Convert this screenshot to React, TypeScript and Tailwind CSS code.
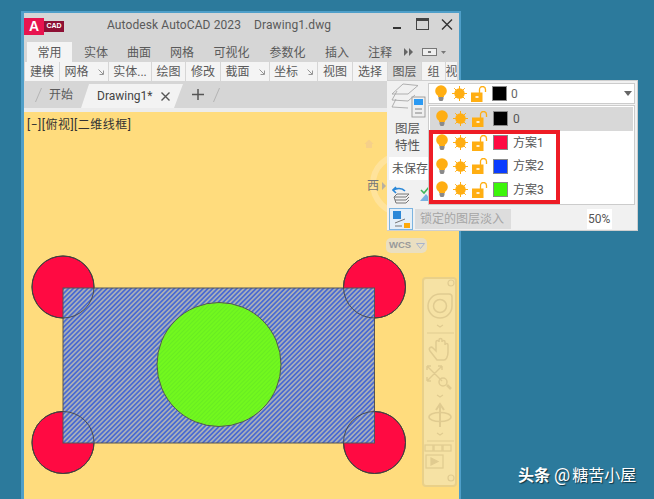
import React from "react";

const cjk = { fontFamily: 'Roboto,"Noto Sans CJK SC",sans-serif' };

function Bulb() {
  return (
    <svg width="12" height="17" viewBox="0 0 12 17" className="shrink-0">
      <circle cx="6" cy="6" r="5.800" fill="#ffae12" />
      <path d="M3.500 11h5v3l-1 2h-3l-1-2z" fill="#8a8a8a" />
      <path d="M3 11.500h6" stroke="#ffae12" strokeWidth="1" />
    </svg>
  );
}
function Sun() {
  return (
    <svg width="15" height="15" viewBox="0 0 15 15" className="shrink-0">
      <circle cx="7.500" cy="7.500" r="5.200" fill="#ffae12" />
      <g stroke="#ffae12" strokeWidth="1">
        <path d="M7.500 0v3M7.500 12v3M0 7.500h3M12 7.500h3M2.200 2.200l2 2M10.800 10.800l2 2M2.200 12.800l2-2M10.800 4.200l2-2" />
      </g>
    </svg>
  );
}
function Lock() {
  return (
    <svg width="16" height="16" viewBox="0 0 16 16" className="shrink-0">
      <path d="M8.500 7V3.500a3 3 0 0 1 6 0V6" fill="none" stroke="#ffae12" strokeWidth="1.300" />
      <rect x="0" y="6.500" width="11.500" height="9.500" fill="#ffae12" />
      <rect x="4.500" y="10" width="3" height="2" fill="#fff" opacity="0.8" />
    </svg>
  );
}
function LayerRow({ color, name, active }: { color: string; name: string; active?: boolean }) {
  return (
    <div className={`flex items-center h-[23.700px] pl-[6px] ${active ? "bg-[#d8d8d8]" : ""}`}>
      <Bulb />
      <span className="w-[5px] shrink-0" />
      <Sun />
      <span className="w-[4px] shrink-0" />
      <Lock />
      <span className={`ml-[5px] w-[15px] h-[15px] shrink-0 border-[1.500px] border-[#8a8a8a] ${color}`} />
      <span className="ml-[5px] text-[12px] text-[#555]">{name}</span>
    </div>
  );
}
function Arrow() {
  return (
    <svg width="6" height="6" viewBox="0 0 6 6" className="shrink-0" fill="none" stroke="#8a8a8a" strokeWidth="0.900">
      <path d="M0.500 0.500l4.500 4.500M5.500 1.500v4h-4" />
    </svg>
  );
}
function PanelItem({ w, label, arrow, active }: { w: string; label: string; arrow?: boolean; active?: boolean }) {
  return (
    <div className={`${w} shrink-0 h-full flex items-center justify-center gap-[9px] overflow-hidden whitespace-nowrap pt-[1px] ${active ? "bg-[#dcdcdc]" : "bg-[#f4f4f4]"}`}>
      <span>{label}</span>
      {arrow && <Arrow />}
    </div>
  );
}
function Slash() {
  return (
    <svg width="7" height="14" viewBox="0 0 7 14" className="shrink-0"><path d="M6.500 0L0.500 14" stroke="#b0b0b0" strokeWidth="0.900" /></svg>
  );
}

const corners = [[63, 287], [374.5, 287], [63, 442.5], [374.5, 442.5]];

export default function App() {
  const tabs: [string, string][] = [
    ["实体", "w-[43px]"], ["曲面", "w-[43px]"], ["网格", "w-[43px]"], ["可视化", "w-[56px]"],
    ["参数化", "w-[56px]"], ["插入", "w-[43px]"], ["注释", "w-[43px]"],
  ];
  return (
    <div className="relative w-[654px] h-[499px] overflow-hidden bg-[#2c7a9c]" style={cjk}>
      <div className="absolute left-[518px] top-[464px] text-white text-[16px] leading-[22px] whitespace-nowrap [text-shadow:1px_1px_1px_rgba(0,0,0,0.6)]">
        <span className="font-bold">头条</span> <span className="text-[18px] mr-[2px]">@</span>糖苦小屋
      </div>

      {/* window */}
      <div className="absolute left-[21px] top-[11px] w-[440px] h-[488px] border-l-[3px] border-r-[2px] border-t-[2px] border-[#4f9fc9] bg-[#d6d6d6] flex flex-col text-[#5a5a5a]">
        {/* title */}
        <div className="h-[29px] shrink-0 flex items-start relative">
          <div className="mt-[5px] flex items-center">
            <div className="w-[20px] h-[17px] bg-[#e8144f] text-white font-bold text-[14px] flex items-center justify-center" style={{ fontFamily: '"Liberation Sans",sans-serif' }}>A</div>
            <div className="w-[20px] h-[11px] bg-[#8d1034] text-white font-bold text-[7px] flex items-center justify-center" style={{ fontFamily: '"Liberation Sans",sans-serif' }}>CAD</div>
          </div>
          <div className="ml-[43px] mt-[3px] text-[12px] leading-[18px] tracking-[0.100px] text-[#5a5a5a] whitespace-nowrap">Autodesk AutoCAD 2023<span className="ml-[13px]">Drawing1.dwg</span></div>
          <div className="absolute left-[369px] top-[14px] w-[8px] h-[2px] bg-[#333]" />
          <div className="absolute left-[392px] top-[5px] w-[13px] h-[12px] border border-[#444] border-t-[3px]" />
          <svg className="absolute left-[417px] top-[6px]" width="12" height="11" viewBox="0 0 12 11"><path d="M1 0.500l10 10M11 0.500l-10 10" stroke="#333" strokeWidth="1.400" /></svg>
        </div>

        {/* ribbon tabs */}
        <div className="h-[20px] shrink-0 flex items-center text-[12px] pl-[3px]">
          <div className="w-[45px] h-full bg-[#f4f4f4] flex items-center justify-center pt-[1px]">常用</div>
          <div className="w-[2.500px]" />
          {tabs.map(([t, w]) => (
            <div key={t} className={`${w} text-center pt-[1px]`}>{t}</div>
          ))}
          <svg className="ml-[2.500px]" width="9" height="8" viewBox="0 0 9 8"><path d="M0 0l4 4-4 4zM5 0l4 4-4 4z" fill="#666" /></svg>
          <div className="ml-[9px] w-[15px] h-[8px] border border-[#777] bg-[#eee] flex items-center justify-center">
            <span className="w-[3px] h-[2px] bg-[#777]" />
          </div>
          <svg className="ml-[4px]" width="5" height="3" viewBox="0 0 5 3"><path d="M0 0h5L2.500 3z" fill="#777" /></svg>
        </div>

        {/* panel row */}
        <div className="h-[19px] shrink-0 flex items-center gap-[1px] text-[12px] pl-[1px] pr-[2px] overflow-hidden">
          <PanelItem w="w-[34px]" label="建模" />
          <PanelItem w="w-[48px]" label="网格" arrow />
          <PanelItem w="w-[42px]" label="实体..." />
          <PanelItem w="w-[33px]" label="绘图" />
          <PanelItem w="w-[34px]" label="修改" />
          <PanelItem w="w-[48px]" label="截面" arrow />
          <PanelItem w="w-[47px]" label="坐标" arrow />
          <PanelItem w="w-[34px]" label="视图" />
          <PanelItem w="w-[34px]" label="选择" />
          <PanelItem w="w-[33px]" label="图层" active />
          <PanelItem w="w-[23px]" label="组" />
          <PanelItem w="w-[11px]" label="视" />
        </div>

        {/* doc tabs */}
        <div className="h-[27px] shrink-0 flex items-center text-[12px] pl-[11px]">
          <Slash />
          <span className="ml-[7px]">开始</span>
          <div className="ml-[8px] mt-[3px] h-[24px] w-[102px] shrink-0 bg-[#f3f3f3] [clip-path:polygon(8px_0,100%_0,calc(100%_-_9px)_100%,0_100%)] flex items-center pl-[16px] text-[#444]">
            Drawing1*
            <svg className="ml-[9px]" width="9" height="9" viewBox="0 0 9 9"><path d="M0.500 0.500l8 8M8.500 0.500l-8 8" stroke="#555" strokeWidth="1.400" /></svg>
          </div>
          <svg className="ml-[9px]" width="12" height="11" viewBox="0 0 12 11"><path d="M6 0v11M0 5.500h12" stroke="#555" strokeWidth="1.500" /></svg>
          <div className="w-[9px]" />
          <Slash />
        </div>

        <div className="h-[4px] shrink-0 bg-[#ececec]" />

        {/* canvas */}
        <div className="flex-1 bg-[#ffdc7d] relative">
          <div className="pl-[3px] pt-[4px] text-[12px] text-[#333] leading-[18px] tracking-[0.500px]">[−][俯视][二维线框]</div>
          {/* viewcube */}
          <div className="absolute left-[346px] top-[40px] w-[64px] h-[64px] rounded-full border-[6px] border-[#ffe39b]" />
          <svg className="absolute left-[340px] top-[27px]" width="10" height="10" viewBox="0 0 10 10"><path d="M5 0.500L0.500 5H2v4h6V5h1.500z" fill="#f6d089" /></svg>
          <div className="absolute left-[343px] top-[67px] text-[12px] text-[#777] leading-[14px] whitespace-nowrap">西</div>
          <svg className="absolute left-[358px] top-[70px]" width="4" height="8" viewBox="0 0 4 8"><path d="M0 0l4 4-4 4z" fill="#b8b0a0" /></svg>
          <div className="absolute left-[362px] top-[126px] w-[41px] h-[15px] rounded-[5px] bg-[#eadfc1] flex items-center pl-[3px] gap-[5px] text-[9.500px] font-bold text-[#999]" style={{ fontFamily: '"Liberation Sans",sans-serif' }}>
            WCS
            <svg width="9" height="6" viewBox="0 0 9 6"><path d="M0.500 0.500h8L4.500 5.500z" fill="none" stroke="#a9b4cc" /></svg>
          </div>
          {/* drawing */}
          <svg className="absolute left-[-24px] top-[-112px]" width="460" height="499" viewBox="0 0 460 499">
            <defs>
              <pattern id="h" width="3.400" height="3.400" patternUnits="userSpaceOnUse" patternTransform="rotate(-45)">
                <rect width="3.400" height="3.400" fill="#a8aeb8" />
                <rect width="3.400" height="1.700" fill="#4a6ad2" />
              </pattern>
              <pattern id="g" width="3" height="3" patternUnits="userSpaceOnUse" patternTransform="rotate(-45)">
                <rect width="3" height="3" fill="#72f81e" />
                <rect width="3" height="1" fill="#68ec22" />
              </pattern>
            </defs>
            {corners.map(([x, y]) => (
              <circle key={x + "-" + y} cx={x} cy={y} r="31" fill="#ff0a42" stroke="#333" strokeWidth="1" />
            ))}
            <rect x="63" y="288" width="311.500" height="155" fill="url(#h)" stroke="#555" strokeWidth="1" />
            {corners.map(([x, y]) => (
              <circle key={"o" + x + y} cx={x} cy={y} r="31" fill="none" stroke="#444" strokeWidth="0.900" />
            ))}
            <circle cx="219" cy="364.500" r="62" fill="url(#g)" stroke="#555" strokeWidth="1" />
          </svg>
          {/* nav bar */}
          <div className="absolute left-[398px] top-[165px] w-[35px] h-[210px] rounded-[4px] bg-[#f6e2a4] border-2 border-[#e9d089]">
            <svg width="31" height="206" viewBox="0 0 31 206" fill="none" stroke="#e0cb90" strokeWidth="1.200">
              <circle cx="27" cy="4" r="3" />
              <path d="M16 15h9a3 3 0 0 1 3 3v9a12 12 0 1 1-12-12z" strokeWidth="1.500" />
              <circle cx="16" cy="27" r="6.500" strokeWidth="1.500" />
              <path d="M13 46l3 2 3-2" />
              <path d="M3 54h27M3 162h27" />
              <path d="M13 81l-7-9c-2-3 1-5 3-3l3 3V63c0-2 3-2 3 0v-2c0-2 3-2 3 0v2c0-2 3-2 3 0v3c0-2 3-2 3 0v7c0 5-2 8-4 8z" strokeWidth="1.500" />
              <path d="M3 87l15 15M18 87L3 102M3 87h4M3 87v4M18 87h-4M18 87v4M3 102h4M3 102v-4" strokeWidth="1.400" />
              <circle cx="19" cy="103" r="4" strokeWidth="1.500" />
              <path d="M23 106l4 4" strokeWidth="2.500" />
              <path d="M13 116l3 2 3-2M13 154l3 2 3-2" />
              <path d="M16 125v23M12 131l4-6 4 6" strokeWidth="2" />
              <ellipse cx="16" cy="138" rx="11" ry="4.500" strokeWidth="1.500" />
              <rect x="1" y="166" width="8" height="6" />
              <rect x="10" y="166" width="8" height="6" />
              <rect x="19" y="166" width="8" height="6" />
              <rect x="2" y="176" width="17" height="13" />
              <path d="M7 179l7 3.500-7 3.500z" fill="#e0cb90" />
              <circle cx="27" cy="199" r="3" />
            </svg>
          </div>
        </div>
      </div>

      {/* layer popup */}
      <div className="absolute left-[387px] top-[80px] w-[251px] h-[151px] bg-[#f1f1f1] border-t border-r border-b border-[#cfcfcf] text-[12px] text-[#444] flex flex-col">
        <div className="flex h-[127px] shrink-0">
          {/* left column */}
          <div className="w-[41px] shrink-0 flex flex-col overflow-hidden">
            <svg width="36" height="35" viewBox="0 0 36 35" className="mt-[2px] ml-[3px] shrink-0" fill="none" stroke="#a8a8a8" strokeWidth="0.900">
              <path d="M13 1l15 1.500L18 11H2z" />
              <path d="M7 8L2 17l16 1 7-6" />
              <path d="M6 16l-4 8 16 1" />
              <rect x="22" y="14" width="13" height="20" fill="#efefef" stroke="#999" />
              <rect x="24" y="16" width="9" height="6" fill="#2b9af3" stroke="none" />
              <path d="M25 26h7M25 30h7" stroke="#777" />
            </svg>
            <div className="text-center leading-[17px] mt-[2px] text-[12.500px] text-[#555]">图层<br />特性</div>
            <div className="mt-[3px] ml-[2px] w-[39px] h-[23px] shrink-0 bg-white flex items-center text-[12px] whitespace-nowrap pl-[3px] text-[#555]">未保存</div>
            <div className="flex mt-[6px] gap-[9px] pl-[5px] shrink-0">
              <svg width="19" height="18" viewBox="0 0 19 18" fill="none" stroke="#777" className="shrink-0"><path d="M1 4c4-2 9-2 12 1M4 1L1 4l3 3" stroke="#2b88d8" strokeWidth="1.600" /><path d="M5 8h12l-3 3H2zM2 11l1 3h11l3-3M3 14l1 3h10l3-3" /></svg>
              <svg width="13" height="18" viewBox="0 0 13 18" fill="none" className="shrink-0"><path d="M1 4l3 3 5-6" stroke="#3fb65a" strokeWidth="1.600" /><path d="M0 15l6-7 6 7z" fill="#2b88d8" opacity=".6" /></svg>
            </div>
          </div>
          {/* right column */}
          <div className="flex-1 pt-[2px] pr-[2px] flex flex-col">
            <div className="h-[21px] shrink-0 border border-[#ccc] bg-white flex items-center pl-[6px] relative">
              <Bulb />
              <span className="w-[5px] shrink-0" />
              <Sun />
              <span className="w-[4px] shrink-0" />
              <Lock />
              <span className="ml-[5px] w-[15px] h-[15px] shrink-0 bg-black border-[1.500px] border-[#8a8a8a]" />
              <span className="ml-[4px] text-[#666]">0</span>
              <span className="absolute right-[2px] top-[7px] w-0 h-0 border-x-[4px] border-x-transparent border-t-[5px] border-t-[#666]" />
            </div>
            <div className="mt-[1px] h-[100px] border border-[#ccc] bg-white px-[1px] pt-[1px]">
              <LayerRow color="bg-black" name="0" active />
              <LayerRow color="bg-[#ff0a42]" name="方案1" />
              <LayerRow color="bg-[#0a3cff]" name="方案2" />
              <LayerRow color="bg-[#3cf50a]" name="方案3" />
            </div>
          </div>
        </div>
        {/* bottom row */}
        <div className="flex items-center h-[22px] pl-[2px]">
          <div className="w-[24px] h-[22px] shrink-0 border border-[#7db4e0] bg-[#e4eff8] flex items-center justify-center">
            <svg width="19" height="19" viewBox="0 0 19 19"><rect x="1" y="1" width="8" height="8" fill="#2b88d8" /><path d="M3 13l10-4M3 16h7" stroke="#777" fill="none" /><rect x="12" y="13" width="6" height="5" fill="#fdaa0a" /></svg>
          </div>
          <div className="ml-[2px] w-[96px] h-[20px] shrink-0 bg-[#dddddd] text-[#a5a5a5] text-[12px] flex items-center pl-[5px]">锁定的图层淡入</div>
          <div className="w-[76px] h-[20px] shrink-0" />
          <div className="w-[25px] h-[20px] shrink-0 bg-white flex items-center text-[12px] text-[#555] pl-[1px] whitespace-nowrap">50%</div>
        </div>
      </div>

      {/* red highlight */}
      <div className="absolute left-[429px] top-[130px] w-[131px] h-[74px] border-[4px] border-[#ee1c25]" />
    </div>
  );
}
